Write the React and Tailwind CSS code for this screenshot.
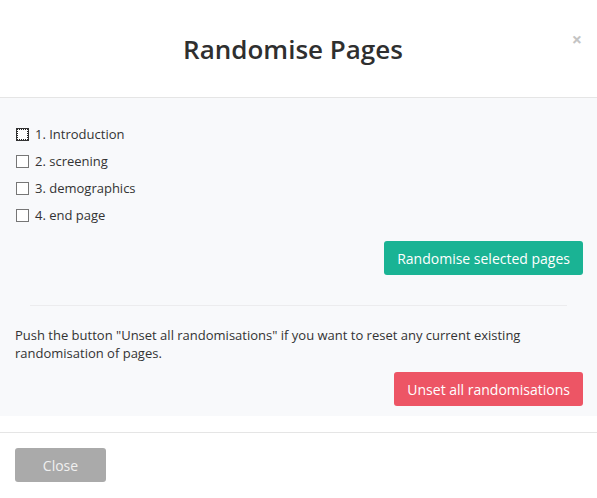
import { useState } from "react";

const pages = ["1. Introduction", "2. screening", "3. demographics", "4. end page"];

export default function App() {
  const [checked, setChecked] = useState([false, false, false, false]);

  const toggle = (i) => setChecked(checked.map((c, j) => (j === i ? !c : c)));

  return (
    <div
      className="w-[597px] h-[498px] bg-white text-[#333] overflow-hidden"
      style={{ fontFamily: '"Open Sans", sans-serif' }}
    >
      {/* header */}
      <div className="relative h-[98px] border-b border-[#e5e5e5] flex items-center justify-center pr-[11px]">
        <h4 className="text-[26px] font-semibold text-[#2f2f2f] leading-none mt-[1px]">Randomise Pages</h4>
        <button className="absolute right-[15px] top-[30px] text-[#c4c4c4] text-[18px] font-bold leading-none">
          ×
        </button>
      </div>

      {/* body */}
      <div className="bg-[#f8f9fb] pl-[15px] pr-[14px] pt-[23px] pb-[10px]">
        <div className="flex flex-col">
          {pages.map((p, i) => (
            <label key={p} className="flex items-center h-[27px] cursor-pointer text-[13px]">
              <span
                onClick={() => toggle(i)}
                className={`ml-[1px] w-[13px] h-[13px] border bg-white flex items-center justify-center ${
                  i === 0 ? "border-[#333] outline outline-1 outline-dotted outline-[#222] -outline-offset-2" : "border-[#767676]"
                }`}
              >
                {checked[i] && <span className="w-[7px] h-[7px] bg-[#333]" />}
              </span>
              <span className="ml-[6px]">{p}</span>
            </label>
          ))}
        </div>

        <div className="flex justify-end mt-[12px]">
          <button className="h-[34px] px-[13px] rounded-[3px] bg-[#1ab394] text-white text-[14px]">
            Randomise selected pages
          </button>
        </div>

        <hr className="ml-[15px] mr-[16px] mt-[30px] border-t border-[#ececee]" />

        <p className="mt-[20px] text-[13px] leading-[18px] pr-[60px]">
          Push the button "Unset all randomisations" if you want to reset any current existing randomisation of pages.
        </p>

        <div className="flex justify-end mt-[10px]">
          <button className="h-[34px] px-[13px] rounded-[3px] bg-[#ed5565] text-white text-[14px]">
            Unset all randomisations
          </button>
        </div>
      </div>

      {/* footer */}
      <div className="mt-[16px] border-t border-[#e5e5e5] px-[15px] pt-[15px]">
        <button className="w-[91px] h-[34px] rounded-[3px] bg-[#aaaaaa] text-[#f0f0f0] text-[14px]">Close</button>
      </div>
    </div>
  );
}
